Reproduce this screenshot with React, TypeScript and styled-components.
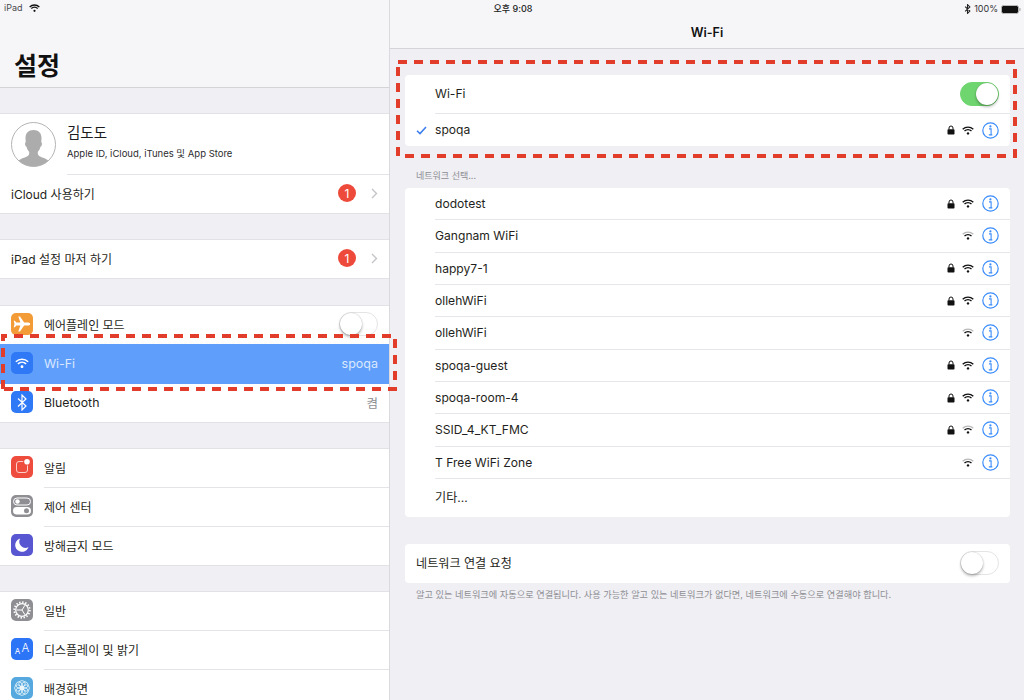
import React from "react";
import styled, { createGlobalStyle } from "styled-components";

const Global = createGlobalStyle`
  html, body { margin: 0; padding: 0; background: #efeff4; }
  body { font-family: "Inter", "Noto Sans CJK KR", sans-serif; color: #1b1b1d; }
  * { box-sizing: border-box; }
`;

const Page = styled.div`
  position: relative;
  display: flex;
  width: 1024px;
  height: 700px;
  overflow: hidden;
  background: #efeff4;
`;

const StatusBar = styled.div`
  position: absolute;
  top: 0;
  left: 0;
  right: 0;
  height: 17px;
  display: grid;
  grid-template-columns: 1fr auto 1fr;
  align-items: center;
  padding: 0 3px 0 4px;
  font-size: 9px;
  line-height: 16px;
  color: #333336;
`;
const StatusLeft = styled.div`
  display: flex;
  align-items: center;
  gap: 6px;
  padding-bottom: 2px;
  color: #4a4a4e;
`;
const StatusTime = styled.div`
  font-weight: 500;
  padding-left: 1px;
  color: #222;
`;
const StatusRight = styled.div`
  display: flex;
  align-items: center;
  justify-content: flex-end;
  gap: 3px;
`;

const Sidebar = styled.aside`
  width: 390px;
  flex: none;
  border-right: 1px solid #d9d9de;
  height: 700px;
  overflow: hidden;
`;
const LargeHeader = styled.header`
  height: 88px;
  padding: 50px 0 0 14px;
  background: #f6f6f9;
  border-bottom: 1px solid #d4d4d8;
  font-size: 25px;
  line-height: 32px;
  font-weight: 700;
  color: #111;
`;
const Group = styled.section<{ $top?: number }>`
  margin-top: ${(p) => p.$top ?? 25}px;
  background: #fff;
  border-top: 1px solid #e2e2e6;
  border-bottom: 1px solid #e2e2e6;
`;
const Row = styled.div<{ $selected?: boolean }>`
  position: relative;
  display: flex;
  align-items: center;
  height: 38px;
  padding: 0 11px 2px;
  gap: 11px;
  font-size: 12.3px;
  color: ${(p) => (p.$selected ? "#dbe8fe" : "#1f1f21")};
  background: ${(p) => (p.$selected ? "#5f9ffb" : "#fff")};
`;
const Divider = styled.div<{ $inset: number; $hidden?: boolean }>`
  height: 1px;
  margin-left: ${(p) => p.$inset}px;
  background: ${(p) => (p.$hidden ? "#5f9ffb" : "#e4e4e8")};
`;
const ProfileRow = styled.div`
  display: flex;
  align-items: center;
  gap: 11px;
  height: 60px;
  padding: 0 11px;
`;
const ProfileText = styled.div`
  display: flex;
  flex-direction: column;
  gap: 5px;
  padding-bottom: 5px;
`;
const ProfileName = styled.div`
  font-size: 14.5px;
  line-height: 20px;
  color: #1c1c1e;
`;
const ProfileSub = styled.div`
  font-size: 9.5px;
  line-height: 12px;
  color: #2c2c2e;
`;
const RowLabel = styled.span<{ $ko?: boolean }>`
  flex: 1;
  font-size: ${(p) => (p.$ko ? "12px" : "inherit")};
`;
const RowValue = styled.span<{ $light?: boolean }>`
  font-size: 12.5px;
  color: ${(p) => (p.$light ? "#dbe8fe" : "#8e8e93")};
`;
const Badge = styled.span`
  width: 18px;
  height: 18px;
  border-radius: 50%;
  background: #ee4a3b;
  color: #fff;
  display: flex;
  align-items: center;
  justify-content: center;
  font-size: 12px;
  margin-right: 4px;
`;
const IconTile = styled.span<{ $bg: string }>`
  width: 22px;
  height: 22px;
  flex: none;
  border-radius: 5px;
  background: ${(p) => p.$bg};
  display: flex;
  align-items: center;
  justify-content: center;
  gap: 1px;
  color: #fff;
`;
const TileBig = styled.span`
  font-size: 11.5px;
  font-weight: 300;
  line-height: 1;
`;
const TileSmall = styled.span`
  font-size: 8px;
  font-weight: 400;
  line-height: 1;
  padding-top: 3px;
`;

const Main = styled.main`
  flex: 1;
  min-width: 0;
`;
const NavBar = styled.header`
  height: 49px;
  padding-top: 17px;
  background: #f6f6f9;
  border-bottom: 1px solid #d4d4d8;
  text-align: center;
  font-size: 12.5px;
  line-height: 32px;
  font-weight: 600;
  color: #111;
`;
const Card = styled.section<{ $top: number }>`
  margin: ${(p) => p.$top}px 14px 0 15px;
  background: #fff;
  border-radius: 4px;
  overflow: hidden;
`;
const NetRow = styled.div<{ $h: number }>`
  display: flex;
  align-items: center;
  height: ${(p) => p.$h}px;
  padding-right: 11px;
  font-size: 12.1px;
  color: #1f1f21;
`;
const CheckSlot = styled.span`
  width: 30px;
  flex: none;
  display: flex;
  justify-content: center;
  padding-left: 3px;
  color: #3a7cf0;
`;
const NetName = styled.span<{ $lift?: boolean }>`
  flex: 1;
  padding-bottom: ${(p) => (p.$lift ? "2px" : "0")};
`;
const PlainLabel = styled.span`
  flex: 1;
  padding: 0 0 2px 11px;
`;
const NetIcons = styled.span`
  display: flex;
  align-items: center;
`;
const LockSlot = styled.span`
  width: 18px;
  display: flex;
  justify-content: center;
`;
const WifiSlot = styled.span`
  width: 16px;
  margin-right: 6px;
  display: flex;
  justify-content: center;
`;
const Rule = styled.div`
  height: 1px;
  margin-left: 30px;
  background: #e6e6ea;
`;
const SectionTitle = styled.div`
  margin: 17px 0 0 26px;
  height: 25px;
  font-size: 9px;
  line-height: 26px;
  color: #8e8e93;
`;
const Footnote = styled.div`
  margin: 6px 0 0 26px;
  font-size: 9.2px;
  line-height: 12px;
  color: #8e8e93;
`;
const Switch = styled.span<{ $on?: boolean }>`
  position: relative;
  width: 39px;
  height: 24px;
  flex: none;
  border-radius: 12px;
  background: ${(p) => (p.$on ? "#6fd56f" : "#fff")};
  border: 1px solid ${(p) => (p.$on ? "#6fd56f" : "#e4e4e7")};
`;
const Knob = styled.span<{ $on?: boolean }>`
  position: absolute;
  top: 0;
  left: ${(p) => (p.$on ? "15px" : "0")};
  width: 22px;
  height: 22px;
  border-radius: 50%;
  background: #fff;
  box-shadow: 0 2px 3px rgba(0, 0, 0, 0.28), 0 0 1px rgba(0, 0, 0, 0.3);
`;
const Marquee = styled.svg`
  position: absolute;
  top: 0;
  left: 0;
  pointer-events: none;
`;

const Wifi = ({ w = 12, c = "#111" }: { w?: number; c?: string }) => (
  <svg width={w} height={(w * 9) / 12} viewBox="0 0 12 9" fill="none" stroke={c} strokeLinecap="butt">
    <path d="M.7 3.2C3.7.4 8.3.4 11.3 3.2" strokeWidth="1.4" />
    <path d="M2.5 5C4.5 3.2 7.5 3.2 9.5 5" strokeWidth="1.4" />
    <circle cx="6" cy="7.4" r="1.2" fill={c} stroke="none" />
  </svg>
);
const FadedWifi = () => (
  <svg width="12" height="9" viewBox="0 0 12 9" fill="none" stroke="#111" strokeLinecap="butt">
    <path d="M.7 3.2C3.7.4 8.3.4 11.3 3.2" strokeWidth="1.4" stroke="#b9b9bc" />
    <path d="M2.5 5C4.5 3.2 7.5 3.2 9.5 5" strokeWidth="1.4" />
    <circle cx="6" cy="7.4" r="1.2" fill="#111" stroke="none" />
  </svg>
);
const Lock = () => (
  <svg width="8" height="10" viewBox="0 0 8 10">
    <path d="M2 4.5V3a2 2 0 0 1 4 0v1.5" fill="none" stroke="#111" strokeWidth="1" />
    <rect x=".5" y="4.2" width="7" height="5.4" rx=".8" fill="#111" />
  </svg>
);
const Info = () => (
  <svg width="17" height="17" viewBox="0 0 17 17">
    <circle cx="8.5" cy="8.5" r="7.7" fill="none" stroke="#3a8cfb" strokeWidth="1.2" />
    <circle cx="8.4" cy="4.4" r="1.1" fill="#3a8cfb" />
    <path d="M7 6.900h2.100v6H10.300M6.800 12.900h3.500" fill="none" stroke="#3a8cfb" strokeWidth="1.100" />
  </svg>
);
const Check = () => (
  <svg width="11" height="9" viewBox="0 0 11 9" fill="none" stroke="currentColor" strokeWidth="1.5">
    <path d="M1 4.8 4 7.6 10 1" />
  </svg>
);
const Chevron = () => (
  <svg width="7" height="11" viewBox="0 0 7 11" fill="none" stroke="#c4c4c8" strokeWidth="1.4">
    <path d="M1 1l4.500 4.500L1 10" />
  </svg>
);
const Avatar = () => (
  <svg width="45" height="45" viewBox="0 0 45 45">
    <defs>
      <clipPath id="av"><circle cx="22.5" cy="22.5" r="22" /></clipPath>
    </defs>
    <circle cx="22.5" cy="22.5" r="22" fill="#fff" stroke="#b4b4b4" strokeWidth="1" />
    <path
      clipPath="url(#av)"
      fill="#acacac"
      d="M22.5 8c-5.2 0-8.2 3.3-8 8.4.1 2 .3 3.3.2 3.9-.8.2-.8 1.6-.4 3 .3 1 .7 1.4 1.2 1.5.5 2.3 1.6 4 2.6 5 .3 1.8 0 3.200-1.200 4.100-2.600 1.700-8.600 2.400-9.900 6.100l-1 6h33l-1-6c-1.300-3.700-7.300-4.400-9.900-6.100-1.200-.9-1.500-2.300-1.200-4.100 1-1 2.100-2.700 2.600-5 .5-.1.900-.5 1.200-1.500.4-1.400.4-2.800-.4-3-.1-.6.100-1.900.2-3.900.2-5.100-2.800-8.400-8-8.400z"
    />
  </svg>
);
const Plane = () => (
  <svg width="18" height="16" viewBox="0 0 18 16" fill="#fff">
    <path d="M17.200 8c0-1-1.200-1.500-2.600-1.500h-3.500L7 .6H5.300l2.100 5.900H3.300L1.900 4.700H.7L1.500 8 .7 11.300h1.200l1.400-1.800h4.100l-2.100 5.900H7l4.100-5.900h3.500c1.400 0 2.600-.5 2.600-1.500z" />
  </svg>
);
const Bt = () => (
  <svg width="10" height="17" viewBox="0 0 10 17" fill="none" stroke="#fff" strokeWidth="1.2">
    <path d="M1 4.500l8 7.500-4 4V1l4 4-8 7.500" />
  </svg>
);
const Bell = () => (
  <svg width="22" height="22" viewBox="0 0 22 22" fill="none">
    <rect x="5.500" y="5.500" width="11" height="11" rx="2.500" stroke="#fbd0cb" strokeWidth="1" />
    <circle cx="16" cy="5.800" r="3.800" fill="#ee4a3b" />
    <circle cx="16" cy="5.800" r="2.800" fill="#fff" />
  </svg>
);
const Toggles = () => (
  <svg width="18" height="18" viewBox="0 0 18 18">
    <rect x=".5" y="1" width="17" height="7" rx="3.500" fill="none" stroke="#fff" />
    <circle cx="4.500" cy="4.500" r="2.200" fill="#fff" />
    <rect y="10" width="18" height="7.500" rx="3.750" fill="#fff" />
    <circle cx="13.500" cy="13.750" r="2.500" fill="#8e8e93" />
  </svg>
);
const Moon = () => (
  <svg width="16" height="16" viewBox="0 0 16 16">
    <path fill="#fff" d="M6.200 1.500a6.800 6.800 0 1 0 8.300 8.600A6.200 6.200 0 0 1 6.200 1.500z" />
  </svg>
);
const Gear = () => (
  <svg width="18" height="18" viewBox="0 0 18 18" fill="none" stroke="#fff">
    <circle cx="9" cy="9" r="6.300" strokeWidth="1.200" />
    <circle cx="9" cy="9" r="7.800" strokeWidth="1.800" strokeDasharray="1.400 1.660" />
    <path d="M3.500 9H9l3 4.800M9 9l3-4.800" strokeWidth="1" />
  </svg>
);
const Flower = () => (
  <svg width="18" height="18" viewBox="0 0 18 18" fill="none" stroke="#eaf5fc" strokeWidth=".8">
    {[0, 45, 90, 135, 180, 225, 270, 315].map((a) => (
      <circle key={a} cx="9" cy="4.800" r="3.200" transform={`rotate(${a} 9 9)`} />
    ))}
    <circle cx="9" cy="9" r="2" fill="#eaf5fc" />
  </svg>
);
const BtSmall = () => (
  <svg width="7" height="10" viewBox="0 0 10 17" fill="none" stroke="#222" strokeWidth="1.800">
    <path d="M1 4.500l8 7.500-4 4V1l4 4-8 7.500" />
  </svg>
);
const Battery = () => (
  <svg width="20" height="9" viewBox="0 0 20 9">
    <rect x=".5" y=".5" width="17" height="8" rx="2" fill="#111" stroke="#bbb" />
    <rect x="18.300" y="3" width="1.200" height="3" rx=".5" fill="#aaa" />
  </svg>
);

const networks: { name: string; lock: boolean; weak?: boolean }[] = [
  { name: "dodotest", lock: true },
  { name: "Gangnam WiFi", lock: false, weak: true },
  { name: "happy7-1", lock: true },
  { name: "ollehWiFi", lock: true },
  { name: "ollehWiFi", lock: false, weak: true },
  { name: "spoqa-guest", lock: true },
  { name: "spoqa-room-4", lock: true },
  { name: "SSID_4_KT_FMC", lock: true, weak: true },
  { name: "T Free WiFi Zone", lock: false, weak: true },
];

const NetStatus = ({ lock, weak }: { lock: boolean; weak?: boolean }) => (
  <NetIcons>
    <LockSlot>{lock && <Lock />}</LockSlot>
    <WifiSlot>{weak ? <FadedWifi /> : <Wifi />}</WifiSlot>
    <Info />
  </NetIcons>
);

const dash = { fill: "none", stroke: "#e23c2b", strokeWidth: 4, strokeDasharray: "9 7" };

export default function App() {
  return (
    <Page>
      <Global />
      <Sidebar>
        <LargeHeader>설정</LargeHeader>
        <Group>
          <ProfileRow>
            <Avatar />
            <ProfileText>
              <ProfileName>김도도</ProfileName>
              <ProfileSub>Apple ID, iCloud, iTunes 및 App Store</ProfileSub>
            </ProfileText>
          </ProfileRow>
          <Divider $inset={67} />
          <Row>
            <RowLabel $ko>iCloud 사용하기</RowLabel>
            <Badge>1</Badge>
            <Chevron />
          </Row>
        </Group>
        <Group>
          <Row>
            <RowLabel $ko>iPad 설정 마저 하기</RowLabel>
            <Badge>1</Badge>
            <Chevron />
          </Row>
        </Group>
        <Group $top={26}>
          <Row>
            <IconTile $bg="#f39b36"><Plane /></IconTile>
            <RowLabel $ko>에어플레인 모드</RowLabel>
            <Switch><Knob /></Switch>
          </Row>
          <Divider $inset={0} $hidden />
          <Row $selected>
            <IconTile $bg="#2f78f6"><Wifi w={14} c="#fff" /></IconTile>
            <RowLabel>Wi-Fi</RowLabel>
            <RowValue $light>spoqa</RowValue>
          </Row>
          <Divider $inset={0} $hidden />
          <Row>
            <IconTile $bg="#2f78f6"><Bt /></IconTile>
            <RowLabel>Bluetooth</RowLabel>
            <RowValue>켬</RowValue>
          </Row>
        </Group>
        <Group>
          <Row>
            <IconTile $bg="#ee4d3e"><Bell /></IconTile>
            <RowLabel $ko>알림</RowLabel>
          </Row>
          <Divider $inset={44} />
          <Row>
            <IconTile $bg="#8e8e93"><Toggles /></IconTile>
            <RowLabel $ko>제어 센터</RowLabel>
          </Row>
          <Divider $inset={44} />
          <Row>
            <IconTile $bg="#5856d0"><Moon /></IconTile>
            <RowLabel $ko>방해금지 모드</RowLabel>
          </Row>
        </Group>
        <Group>
          <Row>
            <IconTile $bg="#8e8e93"><Gear /></IconTile>
            <RowLabel $ko>일반</RowLabel>
          </Row>
          <Divider $inset={44} />
          <Row>
            <IconTile $bg="#2c75f7"><TileSmall>A</TileSmall><TileBig>A</TileBig></IconTile>
            <RowLabel $ko>디스플레이 및 밝기</RowLabel>
          </Row>
          <Divider $inset={44} />
          <Row>
            <IconTile $bg="#55a9de"><Flower /></IconTile>
            <RowLabel $ko>배경화면</RowLabel>
          </Row>
        </Group>
      </Sidebar>
      <Main>
        <NavBar>Wi-Fi</NavBar>
        <Card $top={26}>
          <NetRow $h={38}>
            <CheckSlot />
            <NetName $lift>Wi-Fi</NetName>
            <Switch $on><Knob $on /></Switch>
          </NetRow>
          <Rule />
          <NetRow $h={32}>
            <CheckSlot><Check /></CheckSlot>
            <NetName $lift>spoqa</NetName>
            <NetStatus lock />
          </NetRow>
        </Card>
        <SectionTitle>네트워크 선택...</SectionTitle>
        <Card $top={0}>
          {networks.map((n, i) => (
            <React.Fragment key={i}>
              <NetRow $h={31.33}>
                <CheckSlot />
                <NetName>{n.name}</NetName>
                <NetStatus lock={n.lock} weak={n.weak} />
              </NetRow>
              <Rule />
            </React.Fragment>
          ))}
          <NetRow $h={38}>
            <CheckSlot />
            <NetName $lift>기타...</NetName>
          </NetRow>
        </Card>
        <Card $top={27}>
          <NetRow $h={39}>
            <PlainLabel>네트워크 연결 요청</PlainLabel>
            <Switch><Knob /></Switch>
          </NetRow>
        </Card>
        <Footnote>알고 있는 네트워크에 자동으로 연결됩니다. 사용 가능한 알고 있는 네트워크가 없다면, 네트워크에 수동으로 연결해야 합니다.</Footnote>
      </Main>
      <StatusBar>
        <StatusLeft>iPad<Wifi w={11} /></StatusLeft>
        <StatusTime>오후 9:08</StatusTime>
        <StatusRight><BtSmall />100%<Battery /></StatusRight>
      </StatusBar>
      <Marquee width="1024" height="700">
        <path {...dash} d="M3 389V336H395V389H3" />
        <rect {...dash} x="398" y="62" width="617" height="94" />
      </Marquee>
    </Page>
  );
}
